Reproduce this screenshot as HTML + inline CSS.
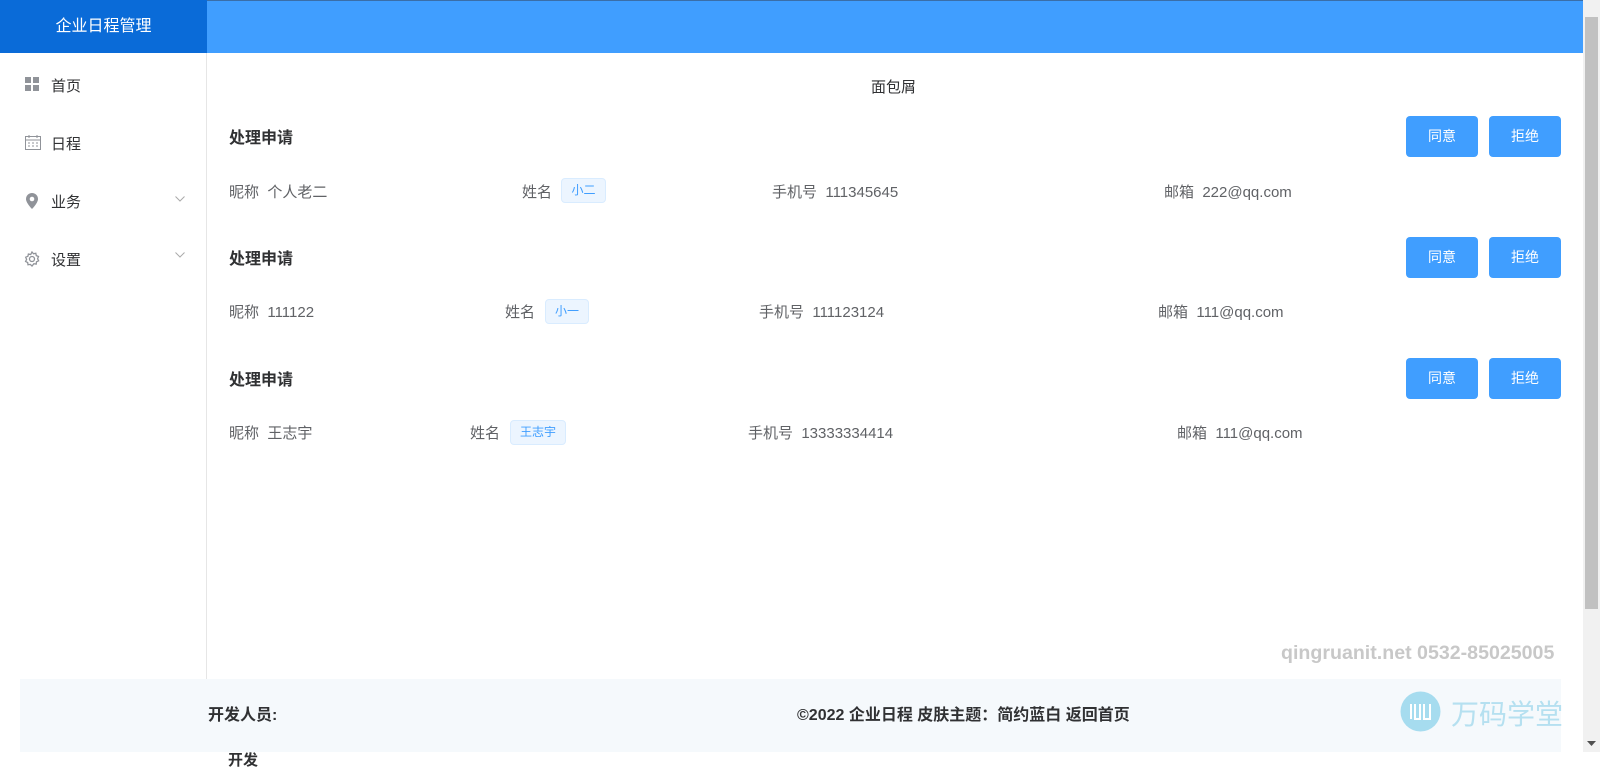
<!DOCTYPE html>
<html><head><meta charset="utf-8"><style>
*{margin:0;padding:0;box-sizing:border-box}
body{width:1600px;height:752px;overflow:hidden;position:relative;background:#fff;font-family:"Liberation Sans","Noto Sans CJK SC",sans-serif;color:#606266}
.a{position:absolute;white-space:nowrap}
.hdr{left:0;top:0;width:1583px;height:53px;background:#409eff;border-top:1px solid #3a6ea8}
.logo{left:0;top:0;width:207px;height:53px;background:#0a6bd8;color:#fff;font-size:16px;line-height:54px;text-align:center}
.side{left:206px;top:53px;width:1px;height:626px;background:#e6e6e6}
.mi{font-size:15px;color:#303133}
.t{font-size:16px;font-weight:bold;color:#303133}
.r{font-size:15px;color:#606266}
.tag{height:25px;line-height:23px;border:1px solid #d9ecff;background:#ecf5ff;color:#409eff;font-size:12px;border-radius:4px;text-align:center}
.btn{width:72px;height:41px;background:#409eff;border-radius:4px;color:#fff;font-size:14px;line-height:41px;text-align:center}
</style></head><body>
<div class="a hdr"></div>
<div class="a logo">企业日程管理</div>
<div class="a side"></div>
<svg class="a" style="left:25px;top:77px" width="14" height="14"><rect x="0" y="0" width="6" height="6" fill="#909399"/><rect x="8" y="0" width="6" height="6" fill="#909399"/><rect x="0" y="8" width="6" height="6" fill="#909399"/><rect x="8" y="8" width="6" height="6" fill="#909399"/></svg>
<div class="a mi" style="left:51px;top:75px">首页</div>
<svg class="a" style="left:25px;top:135px" width="16" height="15" fill="none" stroke="#909399"><rect x="0.5" y="1.5" width="15" height="13"/><line x1="0.5" y1="5" x2="15.5" y2="5"/><line x1="4" y1="0" x2="4" y2="3"/><line x1="12" y1="0" x2="12" y2="3"/><path d="M3 8h2M7 8h2M11 8h2M3 11h2M7 11h2M11 11h2" stroke-width="1"/></svg>
<div class="a mi" style="left:51px;top:133px">日程</div>
<svg class="a" style="left:26px;top:193px" width="12" height="16"><path d="M6 0C2.7 0 0 2.6 0 6c0 4 6 10 6 10s6-6 6-10c0-3.4-2.7-6-6-6z" fill="#909399"/><circle cx="6" cy="6" r="2.3" fill="#fff"/></svg>
<div class="a mi" style="left:51px;top:191px">业务</div>
<svg class="a" style="left:175px;top:196px" width="10" height="6" fill="none" stroke="#aaa"><path d="M0.5 0.5L5 5L9.5 0.5"/></svg>
<svg class="a" style="left:24px;top:251px" width="16" height="16" fill="none" stroke="#909399" stroke-width="1.3"><path d="M8 1l1.5 1.8 2.3-.5.5 2.3 2.2.9-.9 2.2 1 2.1-2.1 1-.3 2.3-2.3-.4L8 15l-1.7-1.6-2.3.4-.3-2.3-2.1-1 1-2.1-.9-2.2 2.2-.9.5-2.3 2.3.5z"/><circle cx="8" cy="8" r="2.5"/></svg>
<div class="a mi" style="left:51px;top:249px">设置</div>
<svg class="a" style="left:175px;top:252px" width="10" height="6" fill="none" stroke="#aaa"><path d="M0.5 0.5L5 5L9.5 0.5"/></svg>

<div class="a" style="left:871px;top:76px;font-size:15px;color:#303133">面包屑</div>

<div class="a t" style="left:229px;top:124px">处理申请</div>
<div class="a btn" style="left:1406px;top:116px">同意</div><div class="a btn" style="left:1489px;top:116px">拒绝</div>
<div class="a r" style="left:229px;top:181px">昵称&nbsp;&nbsp;个人老二</div>
<div class="a r" style="left:522px;top:181px">姓名</div>
<div class="a tag" style="left:561px;top:178px;width:45px">小二</div>
<div class="a r" style="left:772px;top:181px">手机号&nbsp;&nbsp;111345645</div>
<div class="a r" style="left:1164px;top:181px">邮箱&nbsp;&nbsp;222@qq.com</div>

<div class="a t" style="left:229px;top:245px">处理申请</div>
<div class="a btn" style="left:1406px;top:237px">同意</div><div class="a btn" style="left:1489px;top:237px">拒绝</div>
<div class="a r" style="left:229px;top:301px">昵称&nbsp;&nbsp;111122</div>
<div class="a r" style="left:505px;top:301px">姓名</div>
<div class="a tag" style="left:545px;top:299px;width:44px">小一</div>
<div class="a r" style="left:759px;top:301px">手机号&nbsp;&nbsp;111123124</div>
<div class="a r" style="left:1158px;top:301px">邮箱&nbsp;&nbsp;111@qq.com</div>

<div class="a t" style="left:229px;top:366px">处理申请</div>
<div class="a btn" style="left:1406px;top:358px">同意</div><div class="a btn" style="left:1489px;top:358px">拒绝</div>
<div class="a r" style="left:229px;top:422px">昵称&nbsp;&nbsp;王志宇</div>
<div class="a r" style="left:470px;top:422px">姓名</div>
<div class="a tag" style="left:510px;top:420px;width:56px">王志宇</div>
<div class="a r" style="left:748px;top:422px">手机号&nbsp;&nbsp;13333334414</div>
<div class="a r" style="left:1177px;top:422px">邮箱&nbsp;&nbsp;111@qq.com</div>

<div class="a" style="left:1281px;top:642px;font-size:19.6px;font-weight:bold;color:#c8c8c8">qingruanit.net 0532-85025005</div>

<div class="a" style="left:20px;top:679px;width:1541px;height:73px;background:#f5f9fc"></div>
<div class="a t" style="left:208px;top:701px;font-size:16px">开发人员:</div>
<div class="a t" style="left:797px;top:701px;font-size:16px">©2022 企业日程 皮肤主题：简约蓝白 返回首页</div>
<div class="a t" style="left:228px;top:749px;font-size:15px">开发</div>
<svg class="a" style="left:1400px;top:691px" width="41" height="41"><circle cx="20.5" cy="20.5" r="20" fill="#a6dcef"/><path d="M11 13v15M15 13v15h5V13M24 13v15h6V13" stroke="#fff" stroke-width="2" fill="none"/></svg>
<div class="a" style="left:1451px;top:693px;font-size:28px;color:#b5e0f0">万码学堂</div>

<div class="a" style="left:1583px;top:0;width:17px;height:752px;background:#f1f1f1"></div>
<div class="a" style="left:1585px;top:17px;width:13px;height:592px;background:#c1c1c1"></div>
<svg class="a" style="left:1587px;top:741px" width="9" height="5"><path d="M0 0h9L4.5 5z" fill="#505050"/></svg>
</body></html>
